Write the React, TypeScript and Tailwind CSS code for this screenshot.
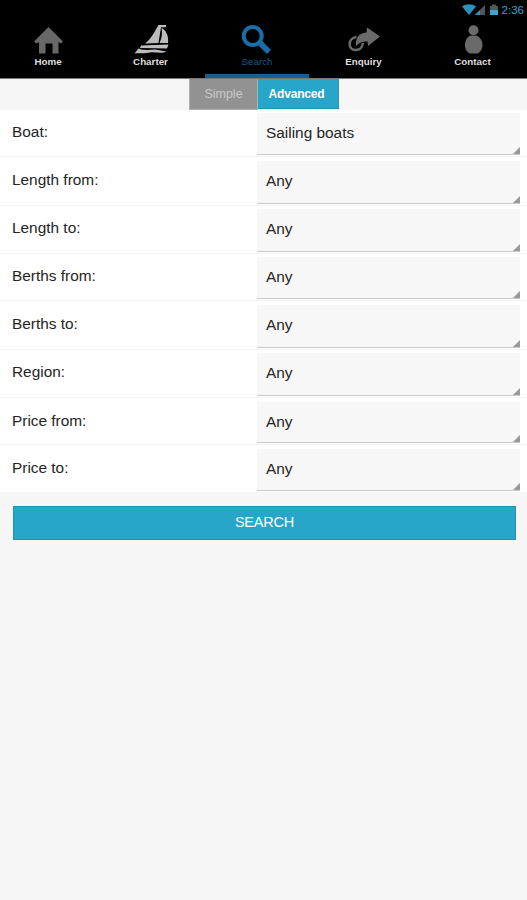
import type { ReactNode } from "react";
import clsx from "clsx";

interface NavItem {
  label: string;
  width: string;
  icon: ReactNode;
  active?: boolean;
}

// Every icon shares a 40x32 canvas
const navItems: NavItem[] = [
  {
    label: "Home",
    width: "w-[96px]",
    icon: <path fill="#686868" d="M20.5 4 35 18.5 33 20.5 30.5 19V30.5H24.5V20.5H17.500V30.5H11V19L8.500 20.500 6 18.500Z" />,
  },
  {
    label: "Charter",
    width: "w-[109px]",
    icon: (
      <g fill="#bcbcbc">
        <path d="M27.500 2H35V4.200H30L27.500 20 14 20.500C20 16 23.500 9 27.500 2Z" />
        <path d="M30.500 5C35 7 38 13 37 20H28.500C31 15 31.500 10 30.500 5Z" />
        <path d="M10 22.500 37.500 21.500 36 25.500 24 25.200 9 25Z" />
        <path d="M7.500 25.500C12 27.500 18 27 24 26.500L35.500 28.500C31 31 24 28.800 19 29.500 13 31 8 29.500 3.500 30.500Z" />
      </g>
    ),
  },
  {
    label: "Search",
    width: "w-[104px]",
    active: true,
    icon: (
      <g fill="none" stroke="#1b6ea5">
        <circle cx="15.700" cy="13" r="9" strokeWidth="4" />
        <path d="m22.500 19.500 9.500 9.500" strokeWidth="5.800" />
      </g>
    ),
  },
  {
    label: "Enquiry",
    width: "w-[109px]",
    icon: (
      <g>
        <path fill="#6a6a6a" d="M23 4.500 36 13.500 24 23 23.500 18.500C19 18 16 19 12 23 11 14.500 16 9.500 22.500 9.500Z" />
        <path d="M12.500 14C8 14.500 5.200 17.500 5.700 22 6.500 29 18 29 18.800 20" fill="none" stroke="#6a6a6a" strokeWidth="2.500" />
      </g>
    ),
  },
  {
    label: "Contact",
    width: "w-[109px]",
    icon: (
      <g fill="#6a6a6a">
        <circle cx="20.500" cy="7.200" r="5" />
        <path d="M17.500 12.500H23.500C27.500 14.500 29.500 18 29.500 22 29.500 26.500 27 29 24.500 30.500H17C14 29 12 26.500 12 22 12 18 13.500 14.500 17.500 12.500Z" />
      </g>
    ),
  },
];

const fields = [
  { label: "Boat:", value: "Sailing boats", row: "h-[47px]" },
  { label: "Length from:", value: "Any", row: "h-[49px] pt-px" },
  { label: "Length to:", value: "Any", row: "h-[48px]" },
  { label: "Berths from:", value: "Any", row: "h-[47px]" },
  { label: "Berths to:", value: "Any", row: "h-[49px] pt-px" },
  { label: "Region:", value: "Any", row: "h-[48px]" },
  { label: "Price from:", value: "Any", row: "h-[47px] pt-px" },
  { label: "Price to:", value: "Any", row: "h-[47px] pt-px" },
];

function StatusBar() {
  return (
    <div className="flex h-5 items-center justify-end pr-[3px] text-[#3aa5d1]">
      <svg width="36" height="12" viewBox="0 0 36 12" className="mr-[4px]">
        <path fill="#2b91bd" d="M0 2.500C4 -.5 10 -.5 14 2.500L7 11Z" />
        <path fill="#555" d="M23 1V11H13Z" />
        <path fill="#2b91bd" d="M18 6V11H13Z" />
        <path fill="#555" d="M30 .5H34V2H36V6H28V2H30Z" />
        <path fill="#3aa5d1" d="M28 6H36V11H28Z" />
      </svg>
      <span className="text-[11.5px] leading-5">2:36</span>
    </div>
  );
}

export default function App() {
  return (
    <div className="min-h-[900px] w-[527px] bg-[#f6f6f6] font-['Liberation_Sans',Arial,sans-serif] text-[#252525]">
      <header className="h-[79px] border-b border-[#777] bg-black">
        <StatusBar />
        <nav className="flex h-[58px]">
          {navItems.map((item) => (
            <button
              key={item.label}
              className={clsx(
                "flex shrink-0 flex-col items-center border-b-4 pt-[3px]",
                item.width,
                item.active ? "border-[#165f8f] text-[#185a88]" : "border-transparent text-[#dedede]",
              )}
            >
              <svg width="40" height="32" viewBox="0 0 40 32" className="block shrink-0">
                {item.icon}
              </svg>
              <span className={clsx("block text-[9.8px] leading-[14px]", item.active ? "font-normal" : "font-bold")}>
                {item.label}
              </span>
            </button>
          ))}
        </nav>
      </header>

      {/* Search mode */}
      <div className="flex h-[31px] pl-[189px]">
        <button className="flex h-[31px] w-[69px] items-center justify-center border-x border-b border-[#b0b0b0] bg-[#929292] text-[12.5px] text-[#c9c9c9]">
          Simple
        </button>
        <button className="flex h-[30px] w-[81px] items-center justify-center border-r border-b border-[#1c98b8] bg-[#27a6ca] pr-[3px] text-xs font-bold tracking-[-0.2px] text-white">
          Advanced
        </button>
      </div>

      <form>
        <div className="bg-white">
          {fields.map((field) => (
            <div
              key={field.label}
              className={clsx("flex border-b border-[#f5f5f5] pr-[7px] text-[15.4px] leading-5 last:border-0", field.row)}
            >
              <label className="w-[257px] pt-3 pl-3">{field.label}</label>
              <div className="mt-[3px] mb-px flex flex-1 items-end justify-between border-b border-[#c9c9c9] bg-[#f7f7f7]">
                <span className="self-start pt-[10px] pl-[9px]">{field.value}</span>
                <svg width="7" height="7" viewBox="0 0 7 7">
                  <path fill="#999" d="M7 0V7H0Z" />
                </svg>
              </div>
            </div>
          ))}
        </div>
        <div className="pt-[14px] pr-[11px] pl-[13px]">
          <button
            type="button"
            className="flex h-[34px] w-full items-center justify-center border border-[#1798b9] bg-[#27a6ca] text-[14.5px] tracking-[-0.2px] text-white"
          >
            SEARCH
          </button>
        </div>
      </form>
    </div>
  );
}
